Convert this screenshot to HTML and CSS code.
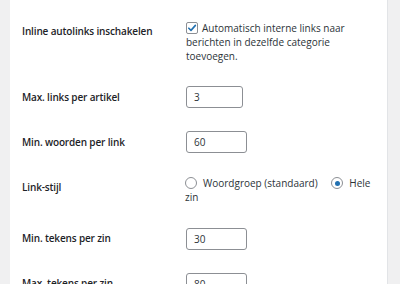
FILE: index.html
```html
<!DOCTYPE html>
<html lang="nl">
<head>
    <meta charset="UTF-8">
    <title>Inline autolinks</title>
    <link rel="stylesheet" href="styles.css">
</head>
<body>
    <div class="panel">
        <div class="form-table">
            <div class="row row-first">
                <div class="label">Inline autolinks inschakelen</div>
                <div class="field">
                    <span class="checkbox">
                        <svg width="12" height="12" viewBox="0 0 12 12" xmlns="http://www.w3.org/2000/svg">
                            <path d="M2.8 6.2 L5 8.4 L9.4 3.4" fill="none" stroke="#2271b1" stroke-width="1.6" stroke-linecap="round" stroke-linejoin="round"/>
                        </svg>
                    </span>Automatisch interne links naar berichten in dezelfde categorie toevoegen.
                </div>
            </div>
            <div class="row">
                <div class="label">Max. links per artikel</div>
                <div class="field"><div class="input input-small">3</div></div>
            </div>
            <div class="row">
                <div class="label">Min. woorden per link</div>
                <div class="field"><div class="input">60</div></div>
            </div>
            <div class="row">
                <div class="label">Link-stijl</div>
                <div class="field radios">
                    <span class="option"><span class="radio"></span>Woordgroep (standaard)</span>
                    <span class="option"><span class="radio checked"></span>Hele zin</span>
                </div>
            </div>
            <div class="row">
                <div class="label">Min. tekens per zin</div>
                <div class="field"><div class="input">30</div></div>
            </div>
            <div class="row">
                <div class="label">Max. tekens per zin</div>
                <div class="field"><div class="input">80</div></div>
            </div>
        </div>
    </div>
</body>
</html>
```

FILE: styles.css
```css
html, body {
    height: 100%;
}

body {
    margin: 0;
    padding: 0 0 0 10px;
    background-color: #f0f0f1;
    font-family: 'Open Sans', 'Noto Sans', sans-serif;
    font-size: 10px;
    line-height: 14.3px;
    color: #1d2327;
    overflow: hidden;
}

.panel {
    width: 378px;
    min-height: 100%;
    background-color: #fff;
    border-right: 1px solid #e2e4e7;
    box-sizing: border-box;
    padding: 9px 12px 0;
}

.form-table .row {
    display: grid;
    grid-template-columns: 164px 1fr;
}

.form-table .label {
    font-weight: 600;
    letter-spacing: -0.15px;
    padding: 15px 0 0;
}

.form-table .field {
    padding: 11.5px 0;
    color: #2c3338;
}

.form-table .row-first .field {
    padding: 11.7px 0 11px;
}

.checkbox {
    display: inline-block;
    width: 12px;
    height: 12px;
    box-sizing: border-box;
    border: 1px solid #8c8f94;
    border-radius: 2px;
    margin-right: 4px;
    vertical-align: -2px;
    position: relative;
}

    .checkbox svg {
        position: absolute;
        left: -1px;
        top: -1px;
    }

.input {
    width: 61px;
    height: 22px;
    box-sizing: border-box;
    border: 1px solid #8c8f94;
    border-radius: 3px;
    padding: 0 7px;
    line-height: 20px;
    color: #2c3338;
}

.input-small {
    width: 57px;
}

.radios {
    margin-left: -1px;
}

    .radios .option {
        margin-right: 11px;
    }

.radio {
    display: inline-block;
    width: 12px;
    height: 12px;
    box-sizing: border-box;
    border: 1px solid #8c8f94;
    border-radius: 50%;
    margin-right: 6px;
    vertical-align: -2px;
    position: relative;
}

    .radio.checked::after {
        content: "";
        position: absolute;
        left: 2.5px;
        top: 2.5px;
        width: 5px;
        height: 5px;
        border-radius: 50%;
        background-color: #2271b1;
    }
```
